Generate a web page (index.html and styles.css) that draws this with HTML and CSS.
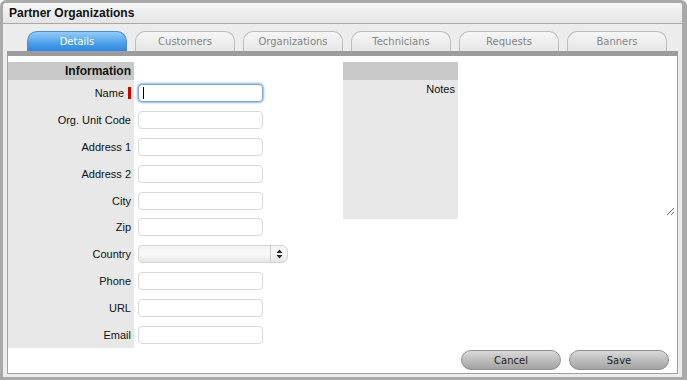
FILE: index.html
```html
<!DOCTYPE html>
<html lang="en">
<head>
  <meta charset="UTF-8">
  <title>Partner Organizations</title>
  <link rel="stylesheet" href="styles.css">
</head>
<body>
  <div class="window">
    <div class="titlebar">Partner Organizations</div>
    <div class="panel">
      <div class="tabs">
        <div class="tab active">Details</div>
        <div class="tab">Customers</div>
        <div class="tab">Organizations</div>
        <div class="tab">Technicians</div>
        <div class="tab">Requests</div>
        <div class="tab">Banners</div>
      </div>
      <div class="content">
        <div class="sections">
          <div class="info">
            <div class="head">Information</div><div></div>
            <label class="lbl">Name <span class="req"></span></label>
            <div class="cell"><span class="field"><input type="text" class="txt focused"><span class="caret"></span></span></div>
            <label class="lbl">Org. Unit Code</label>
            <div class="cell"><input type="text" class="txt"></div>
            <label class="lbl">Address 1</label>
            <div class="cell"><input type="text" class="txt"></div>
            <label class="lbl">Address 2</label>
            <div class="cell"><input type="text" class="txt"></div>
            <label class="lbl">City</label>
            <div class="cell"><input type="text" class="txt"></div>
            <label class="lbl">Zip</label>
            <div class="cell"><input type="text" class="txt"></div>
            <label class="lbl">Country</label>
            <div class="cell">
              <div class="select">
                <span class="sel-body"></span>
                <span class="sel-arrows">
                  <svg width="7" height="10" viewBox="0 0 7 10"><path d="M3.5 0.5 L6.5 4 H0.5 Z M0.5 6 H6.5 L3.5 9.5 Z" fill="#222"/></svg>
                </span>
              </div>
            </div>
            <label class="lbl">Phone</label>
            <div class="cell"><input type="text" class="txt"></div>
            <label class="lbl">URL</label>
            <div class="cell"><input type="text" class="txt"></div>
            <label class="lbl">Email</label>
            <div class="cell"><input type="text" class="txt"></div>
          </div>
          <div class="notes">
            <div class="notes-col">
              <div class="head"></div>
              <div class="notes-lbl">Notes</div>
            </div>
            <textarea class="notes-area"></textarea>
          </div>
        </div>
        <div class="actions">
          <button class="btn">Cancel</button>
          <button class="btn">Save</button>
        </div>
      </div>
    </div>
  </div>
</body>
</html>
```

FILE: styles.css
```css
body {
  margin: 0;
  background: #fff;
  font-family: "Liberation Sans", Arial, sans-serif;
}
.window {
  width: 687px;
  height: 380px;
  box-sizing: border-box;
  border: 3px solid #a9a9a9;
  border-right-width: 5px;
  border-radius: 6px 6px 0 0;
  background: #ececec;
  display: flex;
  flex-direction: column;
}
.titlebar {
  height: 20px;
  line-height: 20px;
  padding-left: 6px;
  font-size: 12px;
  font-weight: bold;
  color: #111;
  background: linear-gradient(#f7f7f7, #e4e4e4);
  border-bottom: 1px solid #a8a8a8;
  border-radius: 4px 4px 0 0;
}
.panel {
  flex: 1;
  padding: 7px 4px 3px 4px;
  display: flex;
  flex-direction: column;
}
.tabs {
  display: flex;
  gap: 8px;
  padding-left: 20px;
  height: 20px;
}
.tab {
  width: 100px;
  box-sizing: border-box;
  border: 1px solid #bcbcbc;
  border-bottom: none;
  border-radius: 10px 10px 0 0;
  background: linear-gradient(#f6f6f6, #e6e6e6);
  font-family: "DejaVu Sans", Verdana, sans-serif;
  font-size: 10px;
  line-height: 19px;
  text-align: center;
  color: #858585;
}
.tab.active {
  border-color: #4a8fdc;
  background: linear-gradient(#92cdf9, #4c9eea 60%, #2f86e2);
  color: #fff;
}
.content {
  flex: 1;
  background: #fff;
  border: 1px solid #a0a0a0;
  border-top: 5px solid #9c9c9c;
  display: flex;
  flex-direction: column;
}
.sections {
  display: flex;
  padding-top: 6px;
}
.info {
  width: 335px;
  display: grid;
  grid-template-columns: 126px 1fr;
  column-gap: 4px;
  align-content: start;
}
.head {
  height: 18px;
  line-height: 18px;
  background: #c8c8c8;
  text-align: right;
  padding-right: 3px;
  font-size: 12px;
  font-weight: bold;
  color: #111;
}
.lbl {
  height: 26.8px;
  background: #e8e8e8;
  display: flex;
  align-items: center;
  justify-content: flex-end;
  padding-right: 3px;
  font-size: 11px;
  color: #111;
}
.req {
  display: inline-block;
  width: 3px;
  height: 12px;
  background: #d40000;
  margin-left: 4px;
}
.cell {
  height: 26.8px;
  display: flex;
  align-items: center;
}
.txt {
  width: 125px;
  height: 18px;
  box-sizing: border-box;
  margin: 0;
  border: 1px solid #d8d8d8;
  border-radius: 4px;
  background: #fff;
  outline: none;
}
.txt.focused {
  border-color: #7fa9d8;
  box-shadow: 0 0 2px 1px #8fb8e6;
}
.field {
  position: relative;
  display: flex;
}
.caret {
  position: absolute;
  left: 5px;
  top: 3px;
  width: 1px;
  height: 12px;
  background: #000;
}
.select {
  width: 150px;
  height: 18px;
  box-sizing: border-box;
  border: 1px solid #d4d4d4;
  border-radius: 4px 6px 6px 4px;
  background: linear-gradient(#f2f2f2, #fafafa 50%, #e6e6e6);
  display: flex;
}
.sel-body {
  flex: 1;
  border-right: 1px solid #cfcfcf;
}
.sel-arrows {
  width: 16px;
  display: flex;
  align-items: center;
  justify-content: center;
}
.notes {
  display: flex;
}
.notes-col {
  width: 115px;
  height: 157px;
  background: #e8e8e8;
}
.notes-lbl {
  text-align: right;
  padding: 3px 3px 0 0;
  font-size: 11px;
  color: #111;
}
.notes-area {
  width: 217px;
  height: 154px;
  box-sizing: border-box;
  margin: 0;
  border: none;
  outline: none;
  resize: both;
}
.actions {
  margin-top: auto;
  display: flex;
  justify-content: flex-end;
  gap: 8px;
  padding: 0 8px 3px 0;
}
.btn {
  width: 100px;
  height: 20px;
  border: 1px solid #8e8e8e;
  border-radius: 10px;
  background: linear-gradient(#dadada, #bdbdbd 50%, #a2a2a2);
  font-family: "DejaVu Sans", Verdana, sans-serif;
  font-size: 10px;
  color: #222;
  padding: 0;
}
```
